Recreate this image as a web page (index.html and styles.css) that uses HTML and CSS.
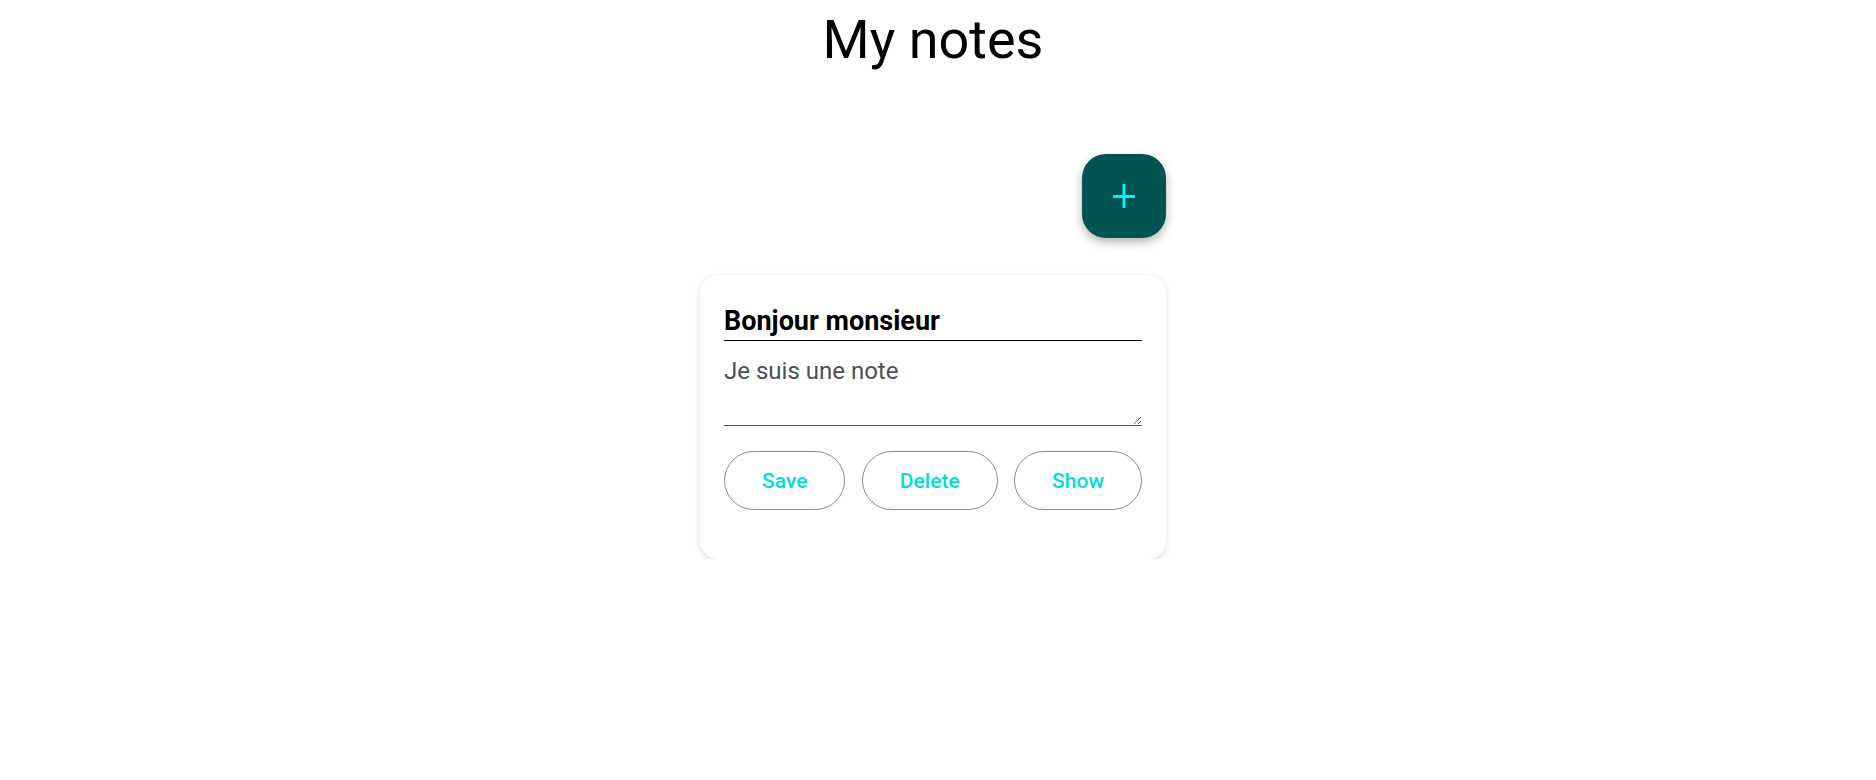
FILE: index.html
```html
<!DOCTYPE html>
<html lang="en">
<head>
<meta charset="utf-8">
<title>My notes</title>
<link rel="stylesheet" href="styles.css">
</head>
<body>
<div class="page">
  <h1 class="title">My notes</h1>
  <div class="notes">
    <div class="toolbar">
      <button class="fab" aria-label="Add note">
        <svg width="22" height="24" viewBox="0 0 22 24" aria-hidden="true">
          <path d="M0 12.5H22M11 0V24" stroke="#00f0f0" stroke-width="3" fill="none"/>
        </svg>
      </button>
    </div>
    <div class="card">
      <input class="note-title" type="text" value="Bonjour monsieur">
      <textarea class="note-body">Je suis une note</textarea>
      <div class="actions">
        <button class="btn">Save</button>
        <button class="btn">Delete</button>
        <button class="btn">Show</button>
      </div>
    </div>
  </div>
</div>
</body>
</html>
```
FILE: styles.css
```css
html, body {
  margin: 0;
  background: #ffffff;
  font-family: Roboto, "Liberation Sans", sans-serif;
}
.page {
  padding: 8px 10px 0 0;
  display: flex;
  flex-direction: column;
  align-items: center;
}
.title {
  margin: 0;
  font-size: 54px;
  font-weight: 400;
  line-height: normal;
  color: #000;
}
.notes {
  width: 466px;
  display: flex;
  flex-direction: column;
}
.toolbar {
  display: flex;
  justify-content: flex-end;
  margin-top: 83px;
}
.fab {
  width: 84px;
  height: 84px;
  border: none;
  border-radius: 24px;
  background: #005350;
  box-shadow: 0 4px 10px rgba(0, 0, 0, 0.3);
  display: flex;
  align-items: center;
  justify-content: center;
  padding: 0;
  cursor: pointer;
}
.card {
  margin-top: 37px;
  background: #fff;
  border-radius: 18px;
  box-shadow: 0 2px 6px rgba(0, 0, 0, 0.14);
  padding: 30px 24px 49px;
  display: flex;
  flex-direction: column;
}
.note-title {
  font-family: inherit;
  font-size: 27px;
  font-weight: 700;
  color: #000;
  border: none;
  border-bottom: 1px solid #000;
  padding: 0 0 3px;
  margin: 0;
  outline: none;
  background: transparent;
  line-height: normal;
}
.note-body {
  font-family: inherit;
  font-size: 24px;
  color: #4a5058;
  border: none;
  border-bottom: 1px solid #4a5058;
  padding: 16px 0 0;
  margin: 0;
  height: 85px;
  box-sizing: border-box;
  outline: none;
  background: transparent;
  resize: vertical;
  line-height: normal;
}
.actions {
  display: flex;
  justify-content: space-between;
  margin-top: 25px;
}
.btn {
  height: 59px;
  padding: 0 37px;
  border: 1px solid #858d8d;
  border-radius: 30px;
  background: #fff;
  color: #00dcdc;
  font-family: inherit;
  font-size: 21px;
  font-weight: 500;
  cursor: pointer;
}
```
